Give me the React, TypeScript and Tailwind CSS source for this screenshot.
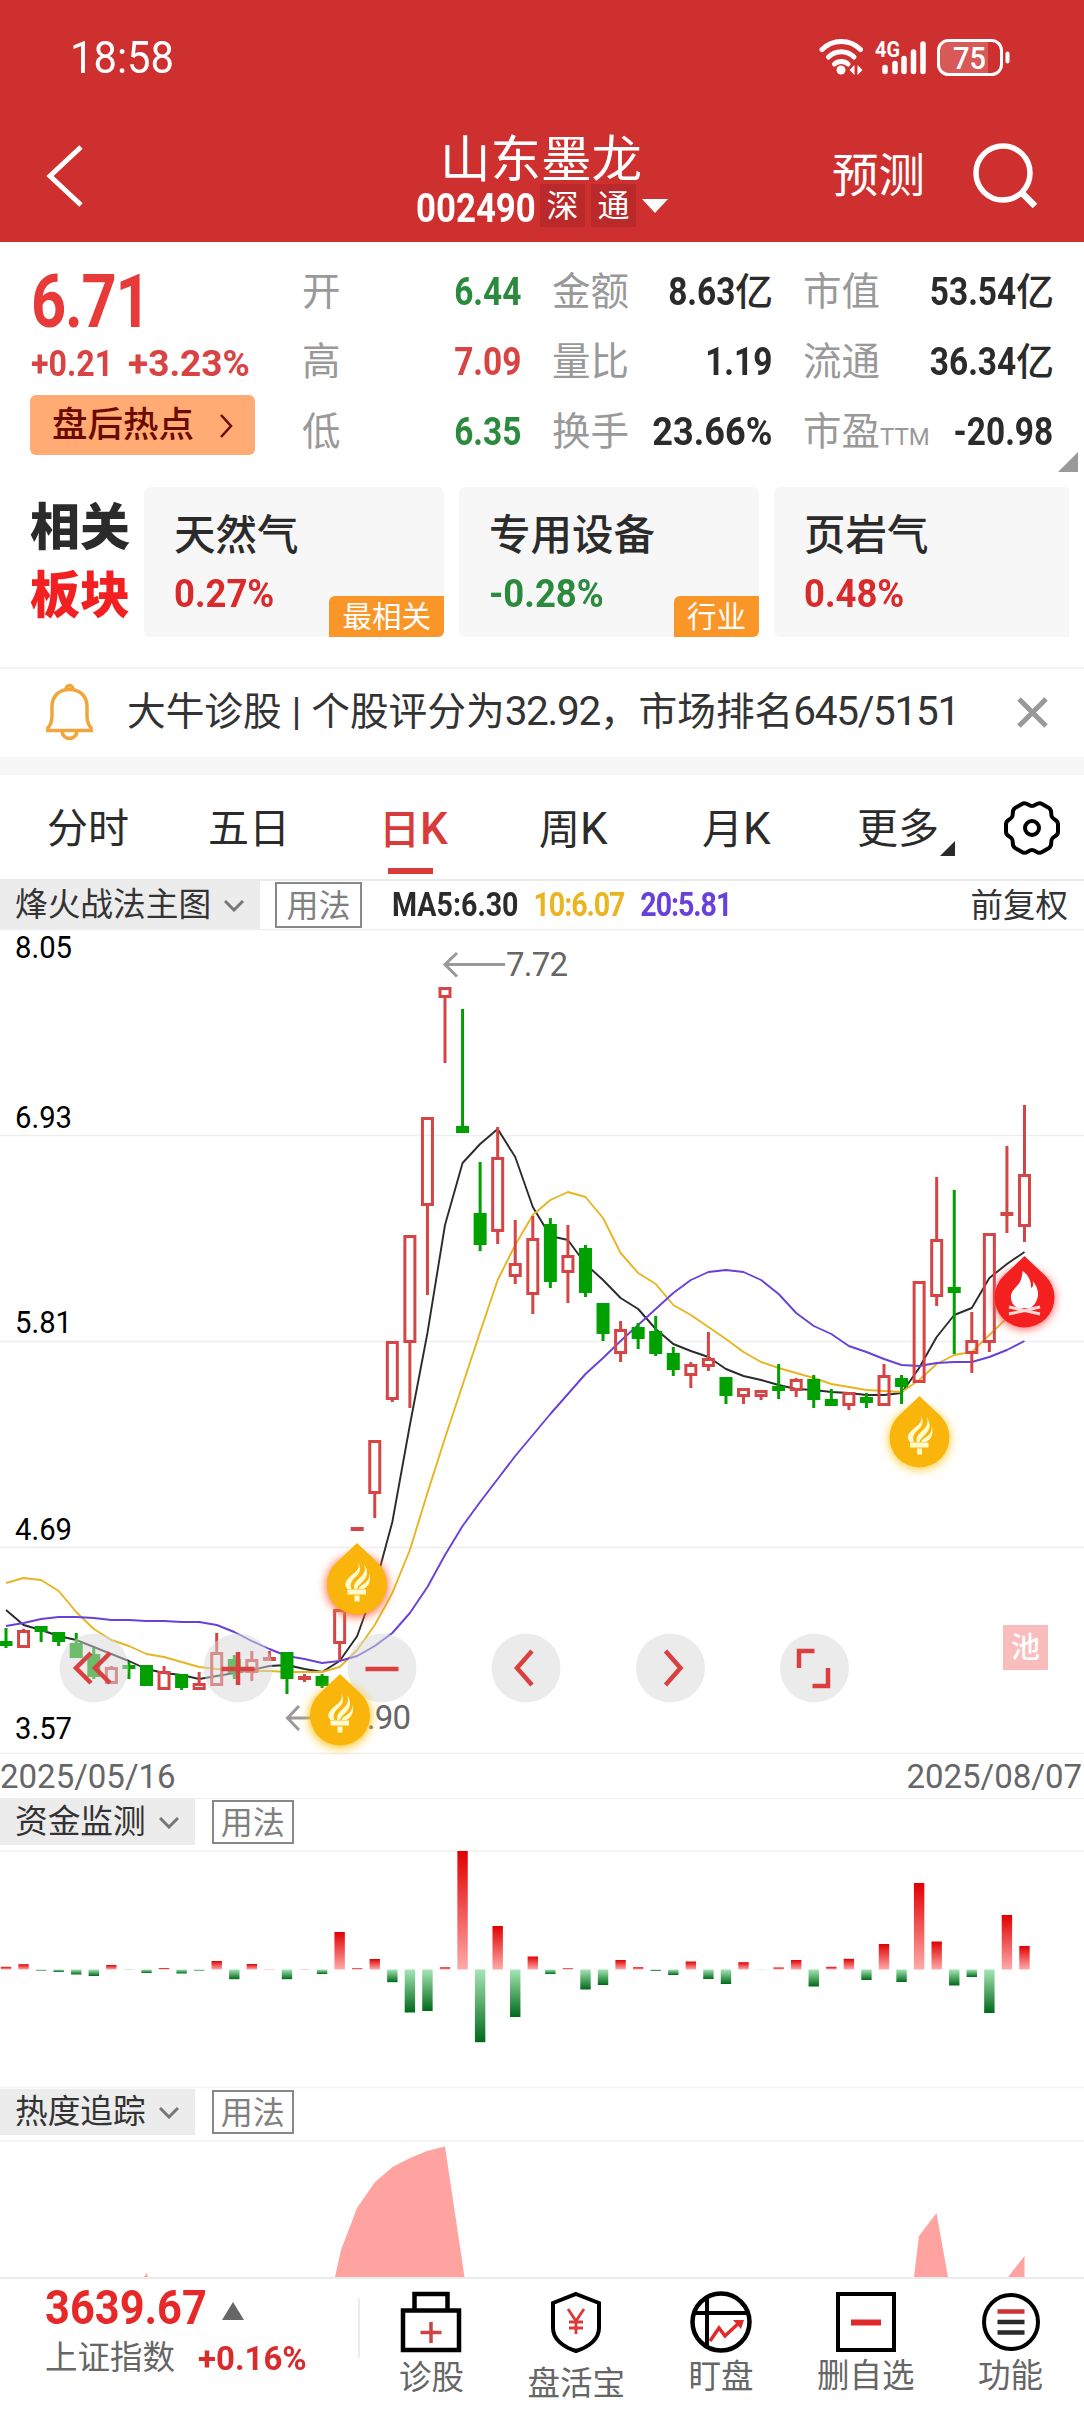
import React from "react";
import clsx from "clsx";

const STEP = 17.56;
const X0 = 6;
const cx = (i: number) => X0 + i * STEP;

// [direction, high, body top, body bottom, low], u = hollow red, d = solid green
type Candle = ["u" | "d", number, number, number, number];

const candles: Candle[] = [
  ["d", 1628, 1641, 1646, 1648],
  ["u", 1629, 1630, 1648, 1648],
  ["d", 1626, 1626, 1632, 1642],
  ["d", 1632, 1632, 1642, 1646],
  ["d", 1633, 1643, 1658, 1658],
  ["d", 1648, 1654, 1677, 1679],
  ["u", 1666, 1667, 1684, 1684],
  ["d", 1662, 1665, 1669, 1679],
  ["d", 1665, 1665, 1686, 1686],
  ["u", 1666, 1671, 1690, 1690],
  ["d", 1674, 1674, 1688, 1690],
  ["u", 1672, 1683, 1690, 1690],
  ["u", 1633, 1652, 1686, 1686],
  ["d", 1655, 1659, 1673, 1679],
  ["u", 1651, 1659, 1673, 1681],
  ["u", 1651, 1657, 1661, 1661],
  ["d", 1652, 1652, 1679, 1694],
  ["u", 1674, 1676, 1680, 1682],
  ["d", 1674, 1676, 1686, 1688],
  ["u", 1609, 1609, 1644, 1660],
  ["u", 1527, 1527, 1531, 1531],
  ["u", 1440, 1440, 1494, 1518],
  ["u", 1341, 1341, 1400, 1402],
  ["u", 1235, 1235, 1343, 1408],
  ["u", 1117, 1117, 1206, 1295],
  ["u", 987, 987, 998, 1063],
  ["d", 1009, 1126, 1133, 1133],
  ["d", 1162, 1213, 1245, 1251],
  ["u", 1127, 1157, 1232, 1244],
  ["u", 1220, 1263, 1277, 1284],
  ["u", 1216, 1238, 1295, 1314],
  ["d", 1218, 1224, 1282, 1288],
  ["u", 1225, 1255, 1273, 1303],
  ["d", 1245, 1248, 1293, 1297],
  ["d", 1303, 1303, 1334, 1341],
  ["u", 1321, 1329, 1354, 1362],
  ["d", 1323, 1327, 1339, 1349],
  ["d", 1316, 1331, 1354, 1356],
  ["d", 1347, 1353, 1370, 1376],
  ["u", 1362, 1364, 1376, 1388],
  ["u", 1332, 1358, 1367, 1371],
  ["d", 1377, 1377, 1396, 1404],
  ["u", 1388, 1388, 1397, 1404],
  ["u", 1390, 1390, 1397, 1400],
  ["d", 1364, 1386, 1391, 1399],
  ["u", 1378, 1379, 1391, 1397],
  ["d", 1375, 1379, 1400, 1408],
  ["d", 1389, 1399, 1406, 1406],
  ["u", 1392, 1392, 1406, 1410],
  ["d", 1393, 1397, 1403, 1408],
  ["u", 1364, 1375, 1406, 1406],
  ["d", 1375, 1378, 1387, 1404],
  ["u", 1281, 1281, 1383, 1383],
  ["u", 1177, 1239, 1297, 1306],
  ["d", 1190, 1287, 1293, 1354],
  ["u", 1312, 1340, 1354, 1373],
  ["u", 1233, 1233, 1343, 1352],
  ["u", 1146, 1212, 1216, 1233],
  ["u", 1105, 1174, 1227, 1242],
];

const ma5 = [
  1610, 1625, 1630, 1636, 1640, 1647, 1654, 1661, 1669, 1673, 1675, 1679, 1676, 1673, 1670, 1666, 1665, 1669, 1672, 1661,
  1636, 1587, 1522, 1425, 1333, 1225, 1163, 1144, 1129, 1157, 1207, 1236, 1240, 1264, 1280, 1298, 1309, 1329, 1344, 1351,
  1357, 1369, 1376, 1380, 1385, 1389, 1390, 1392, 1393, 1395, 1395, 1393, 1368, 1337, 1315, 1308, 1278, 1264, 1252,
];

const ma10 = [
  1583, 1578, 1580, 1591, 1612, 1629, 1640, 1646, 1654, 1657, 1662, 1667, 1669, 1670, 1671, 1671, 1672, 1672, 1672, 1667,
  1650, 1625, 1593, 1550, 1493, 1438, 1385, 1332, 1280, 1245, 1215, 1200, 1192, 1197, 1218, 1253, 1273, 1284, 1305, 1315,
  1327, 1339, 1352, 1362, 1368, 1373, 1378, 1384, 1387, 1390, 1391, 1392, 1380, 1364, 1355, 1352, 1335, 1318, 1300,
];

const ma20 = [
  1626, 1623, 1619, 1617, 1617, 1618, 1620, 1620, 1621, 1621, 1622, 1622, 1625, 1632, 1641, 1649, 1656, 1659, 1663, 1661,
  1656, 1646, 1633, 1613, 1587, 1555, 1526, 1502, 1479, 1456, 1435, 1414, 1394, 1374, 1358, 1341, 1325, 1309, 1293, 1280,
  1272, 1270, 1272, 1280, 1294, 1313, 1326, 1334, 1346, 1352, 1359, 1365, 1366, 1363, 1362, 1362, 1357, 1350, 1341,
];

const flows = [
  2.7, 5.3, -1, -2.5, -5, -6.5, 4.5, -0.5, -3.5, 1.5, -4, -1, 8.5, -9.7, 5.5, 0.5, -9.7, 0.5, -4.5, 37.5, 1.2, 10.5, -12.7,
  -43, -41.5, 2.2, 118.5, -72.7, 43.5, -47.5, 13, -4.5, 1.2, -20, -15.5, 9.5, 2.3, -1.5, -5.5, 8, -9.5, -14.5, 7.3, -0.4,
  2, 9.5, -17, 2.7, 10.7, -10.5, 25.5, -12.5, 86.5, 28, -16, -7.5, -43.5, 54.5, 23.5,
];

const linePoints = (ys: number[]) => ys.map((y, i) => `${cx(i)},${y}`).join(" ");

function StatusBar() {
  return (
    <div className="flex h-[112px] items-center pl-[70px] pr-[73px] pt-[3px]">
      <span className="inline-block origin-left scale-x-[.95] text-[44px] leading-none">18:58</span>
      <svg className="ml-auto" width="192" height="40" viewBox="819 36 192 40" fill="none" stroke="#fff">
        <g strokeWidth="5" strokeLinecap="round">
          <path d="M822 47.5a27 27 0 0 1 38.500 0" />
          <path d="M828.500 55a18 18 0 0 1 25.500 0" />
          <path d="M834.500 62a10 10 0 0 1 13.500 0" />
        </g>
        <circle cx="841" cy="68" r="4.500" fill="#fff" stroke="none" />
        <path d="M854.500 63v10l-5-5zM857.500 63v10l5-5z" fill="#fff" stroke="none" />
        <g strokeWidth="5.500" strokeLinecap="round">
          <path d="M885 65.500v4M895 61.500v8M904 56.500v13M913.500 50v19.500M923 42v27.500" />
        </g>
        <text x="875" y="55" textLength="25" lengthAdjust="spacingAndGlyphs" fill="#fff" stroke="none" fontSize="22" fontWeight="700">
          4G
        </text>
        <path d="M948 40h40v32h-40a9 9 0 0 1-9-9v-14a9 9 0 0 1 9-9z" fill="#fff" fillOpacity=".2" stroke="none" />
        <rect x="938.500" y="38.500" width="63" height="34" rx="10" strokeWidth="3" />
        <text x="953" y="67" textLength="33" lengthAdjust="spacingAndGlyphs" fill="#fff" stroke="none" fontSize="31" fontWeight="500">
          75
        </text>
        <path d="M1007.500 51.500v8" strokeWidth="4" strokeLinecap="round" />
      </svg>
    </div>
  );
}

function Header() {
  return (
    <header className="h-[242px] bg-[#ce302f] text-white">
      <StatusBar />
      <div className="grid h-[130px] grid-cols-[416px_252px_1fr] items-start">
        <svg className="ml-[46px] mt-8" width="40" height="64" viewBox="0 0 40 64" fill="none" stroke="#fff" strokeWidth="5">
          <path d="M35 3 4 32l31 29" />
        </svg>
        <div className="pt-6">
          <h1 className="-mr-1 pl-6 text-[50.500px] font-normal leading-[48px]">山东墨龙</h1>
          <div className="flex h-[43px] items-center whitespace-nowrap leading-[43px]">
            <span className="w-[124px] pt-[5px]">
              <b className="block origin-left scale-x-[.87] text-[40px] leading-[43px]">002490</b>
            </span>
            <span className="flex h-[43px] w-[45px] items-center justify-center bg-[#bb2a2b] pt-0.5 text-[32px]">深</span>
            <span className="ml-1.5 flex h-[43px] w-[45px] items-center justify-center bg-[#bb2a2b] pt-0.5 text-[32px]">通</span>
            <svg className="ml-1.5" width="26" height="14" viewBox="0 0 26 14" fill="#fff">
              <path d="M0 0h26L13 14z" />
            </svg>
          </div>
        </div>
        <div className="flex justify-end pr-[46px] pt-[31px]">
          <span className="pt-px text-[46.500px] leading-[64px]">预测</span>
          <svg className="ml-[47px]" width="66" height="66" viewBox="0 0 66 66" fill="none" stroke="#fff" strokeWidth="5.500">
            <circle cx="31" cy="30" r="27" />
            <path d="m50 50 13 13" strokeWidth="6.500" />
          </svg>
        </div>
      </div>
    </header>
  );
}

interface StatProps {
  label: string;
  sub?: string;
  value: string;
  unit?: string;
  color?: string;
}

function Stat({ label, sub, value, unit, color = "text-[#2b2b2b]" }: StatProps) {
  const percent = value.endsWith("%");
  return (
    <div className="flex h-[70px] items-center justify-between whitespace-nowrap">
      <span className="-ml-px text-[38.500px] text-[#999]">
        {label}
        {sub && <span className="text-[24px]">{sub}</span>}
      </span>
      <span className={clsx("flex items-center font-bold", color)}>
        <span className={clsx("inline-block origin-right text-[38px]", percent ? "scale-x-[.95]" : "scale-x-[.88]")}>{value}</span>
        {unit && <span className="-mr-px text-[38px] font-medium">{unit}</span>}
      </span>
    </div>
  );
}

function Quote() {
  return (
    <section className="relative flex h-[245px] pt-[15px]">
      <div className="-mt-0.5 w-[303px] pl-[31px]">
        <div className="mt-2 h-[78px] origin-left scale-x-[.83] text-[74px] font-bold leading-[78px] tracking-[-.02em] text-[#e83a38]">6.71</div>
        <div className="mt-[3px] flex h-[40px] whitespace-nowrap text-[37px] font-bold leading-[40px] text-[#d94343]">
          <span className="w-[97px] origin-left scale-x-[.87]">+0.21</span>
          <span className="origin-left">+3.23%</span>
        </div>
        <div className="-ml-px mt-[11px] flex h-[60px] w-[225px] items-center rounded-md bg-[#ffab73] pl-[22px] pt-0.5 text-[35.500px] font-medium text-[#6b0a00]">
          盘后热点
          <svg className="ml-[25px]" width="14" height="24" viewBox="0 0 14 24" fill="none" stroke="#6b0a00" strokeWidth="2.500">
            <path d="m2 1 10 11L2 23" />
          </svg>
        </div>
      </div>
      <div className="w-[218px]">
        <Stat label="开" value="6.44" color="text-[#2b8a3e]" />
        <Stat label="高" value="7.09" color="text-[#d94343]" />
        <Stat label="低" value="6.35" color="text-[#2b8a3e]" />
      </div>
      <div className="ml-8 w-[219px]">
        <Stat label="金额" value="8.63" unit="亿" />
        <Stat label="量比" value="1.19" />
        <Stat label="换手" value="23.66%" />
      </div>
      <div className="ml-8 w-[249px]">
        <Stat label="市值" value="53.54" unit="亿" />
        <Stat label="流通" value="36.34" unit="亿" />
        <Stat label="市盈" sub="TTM" value="-20.98" />
      </div>
      <svg className="absolute right-1.5 top-[210px]" width="20" height="20" viewBox="0 0 20 20" fill="#999">
        <path d="M20 0v20H0z" />
      </svg>
    </section>
  );
}

interface SectorProps {
  name: string;
  pct: string;
  tag?: string;
  down?: boolean;
  last?: boolean;
}

function Sector({ name, pct, tag, down, last }: SectorProps) {
  return (
    <div className={clsx("relative h-[150px] bg-[#f7f7f7] pl-[30px] pt-[26px]", last ? "w-[295px] rounded-l-md" : "w-[300px] rounded-md")}>
      <div className="text-[41.500px] font-medium leading-[46px] text-[#2b2b2b]">{name}</div>
      <div
        className={clsx(
          "mt-3 origin-left scale-x-[.96] text-[38px] font-bold leading-[46px]",
          down ? "text-[#2b8a3e]" : "text-[#d92b2b]",
        )}
      >
        {pct}
      </div>
      {tag && (
        <span className="absolute bottom-0 right-0 flex h-[41px] items-center rounded-br-md rounded-tl-md bg-[#fa9628] px-[13px] pt-0.5 text-[29.500px] text-white">
          {tag}
        </span>
      )}
    </div>
  );
}

function Sectors() {
  return (
    <section className="flex h-[180px] pl-[30px]">
      <div className="w-[114px] pt-[7px] text-[50px] font-black leading-[68px] text-[#2b2b2b]">
        <div>相关</div>
        <div className="text-[#f22020]">板块</div>
      </div>
      <div className="flex gap-[15px]">
        <Sector name="天然气" pct="0.27%" tag="最相关" />
        <Sector name="专用设备" pct="-0.28%" tag="行业" down />
        <Sector name="页岩气" pct="0.48%" last />
      </div>
    </section>
  );
}

function Notice() {
  return (
    <section className="flex h-[90px] items-center border-t-2 border-[#f3f3f3] pl-11 pr-9 pb-0.5">
      <svg width="51" height="58" viewBox="0 0 51 58" fill="none" stroke="#f0a63a" strokeWidth="3.500" strokeLinejoin="round">
        <path d="M2 47.500h47M3 46c4-4 5-8 5-13v-9C8 13 15 6.500 25.500 6.500S43 13 43 24v9c0 5 1 9 5 13" />
        <path d="M22 6.500a3.500 4 0 0 1 7 0M18 48a7.500 7.500 0 0 0 15 0" />
      </svg>
      <p className="ml-8 whitespace-nowrap pb-0.5 text-[38.700px] text-[#333]">
        大牛诊股<span className="mx-2.5">|</span>个股评分为
        <span className="text-[40.500px] tracking-[-1.3px]">32.92</span>，市场排名
        <span className="text-[40.500px] tracking-[-1.3px]">645/5151</span>
      </p>
      <svg className="ml-auto" width="31" height="31" viewBox="0 0 31 31" stroke="#999" strokeWidth="5">
        <path d="m2 2 27 27M29 2 2 29" />
      </svg>
    </section>
  );
}

const tabs = [
  { label: "分时", cell: "w-[129px] pl-[47px]" },
  { label: "五日", cell: "w-[173px] pl-[79px]" },
  { label: "日", k: true, cell: "w-[158px] pl-[77px]", active: true },
  { label: "周", k: true, cell: "w-[162px] pl-[79px]" },
  { label: "月", k: true, cell: "w-[155px] pl-20" },
];

function Tabs() {
  return (
    <nav className="flex h-[106px] border-b-2 border-[#ebebeb] text-[41px] text-[#2b2b2b]">
      {tabs.map((t) => (
        <div key={t.label} className={clsx("shrink-0 whitespace-nowrap pt-6", t.cell, t.active && "font-medium text-[#d93a3a]")}>
          <div className="h-[60px] leading-[60px]">
            {t.label}
            {t.k && <span className="text-[44px]">K</span>}
          </div>
          {t.active && <div className="ml-[9px] mt-[9px] h-1.5 w-[45px] bg-[#d93a3a]" />}
        </div>
      ))}
      <div className="flex w-[227px] pl-20 pt-6 leading-[60px]">
        <span className="whitespace-nowrap">更多</span>
        <svg className="ml-px mt-[42px]" width="15" height="15" viewBox="0 0 15 15" fill="#2b2b2b">
          <path d="M15 0v15H0z" />
        </svg>
      </div>
      <svg className="mt-[25px]" width="56" height="56" viewBox="-28 -28 56 56" fill="none" stroke="#000" strokeWidth="4" strokeLinejoin="round">
        <path d="M-10-24C-6-27-4-22 0-22S6-27 10-24L17-20C21-17 18-14 20-11S26-8 26-4V4C26 8 22 8 20 11S21 17 17 20L10 24C6 27 4 22 0 22S-6 27-10 24L-17 20C-21 17-18 14-20 11S-26 8-26 4V-4C-26-8-22-8-20-11S-21-17-17-20Z" />
        <circle r="7" />
      </svg>
    </nav>
  );
}

function Selector({ name, children }: { name: string; children?: React.ReactNode }) {
  const main = Boolean(children);
  return (
    <div className={clsx("flex items-center", main ? "h-12" : "h-[46px]")}>
      <div className="flex h-full items-center bg-[#ececec] pl-[15px] pr-4 pt-0.5 text-[32.700px] text-[#333]">
        <span className="whitespace-nowrap">{name}</span>
        <svg className="ml-[13px]" width="20" height="12" viewBox="0 0 20 12" fill="none" stroke="#777" strokeWidth="3">
          <path d="m1 1 9 9 9-9" />
        </svg>
      </div>
      <div
        className={clsx(
          "flex shrink-0 items-center justify-center border-2 border-[#888] pt-0.5 text-[32px] text-[#808080]",
          main ? "ml-[15px] h-[46px] w-[87px]" : "ml-[17px] h-[44px] w-[82px]",
        )}
      >
        用法
      </div>
      {children}
    </div>
  );
}

function Torch({ x, y, glow }: { x: number; y: number; glow: string }) {
  return (
    <g transform={`translate(${x} ${y})`}>
      <circle cy="43" r="31" fill={glow} filter="url(#glow)" />
      <path d="M0 0 20.500 19.500A30 30 0 1 1-20.500 19.500Z" fill="#f9b50b" />
      <g fill="#fffbd0">
        <path d="M1 19c2.500 6-1 9-6 13-7 6-8.500 9-4.500 14l4 0c-2-5 0-8.500 4-12C3.500 30 4.500 25 1 19Z" />
        <path d="M7 21c2.500 6 0 10-4.500 14-4 3.800-6.500 7-5 11h2.500C1 41 9 38 10 31 10.500 27 9 24 7 21Z" />
        <path d="M12 30c1 6-2 9-6 11.500C3.500 43 2 44 1.800 46h4.500C11 44 15 38 12 30Z" />
        <path d="M-9.500 46.500h18.500v5h-18.500zM-2.500 52.500h5v6h-5z" />
      </g>
    </g>
  );
}

function Campfire({ x, y }: { x: number; y: number }) {
  return (
    <g transform={`translate(${x} ${y})`}>
      <circle cy="43" r="30" fill="#ff5a5a" filter="url(#glow)" />
      <path d="M0 0 20.500 19.500A30 30 0 1 1-20.500 19.500Z" fill="#f42020" />
      <path
        d="M-2 15c5 3 9 9 8.500 17C9 31 9 28 8 25c5 5 6.500 12 5 17-1.500 5-4 8-7 10H-7c-5-3-7-7-6.500-12 .5-6 6-9 9-14 1.500-4 2.500-7 2.500-11Z"
        fill="#fff"
      />
      <path d="M-15.500 51 15.500 58M15.500 51-15.500 58" stroke="#ffdcdc" strokeWidth="3" />
    </g>
  );
}

function RoundButton({ x, children }: { x: number; children: React.ReactNode }) {
  return (
    <g transform={`translate(${x} 1668)`} fill="none" stroke="#d9403f" strokeWidth="4.500">
      <circle r="34.500" fill="#d8d8d8" fillOpacity=".5" stroke="none" />
      {children}
    </g>
  );
}

function KLine() {
  return (
    <svg className="block" width="1084" height="826" viewBox="0 929 1084 826">
      <defs>
        <filter id="glow" x="-50%" y="-50%" width="200%" height="200%">
          <feGaussianBlur stdDeviation="5" />
        </filter>
      </defs>
      <path d="M0 929.500h1084M0 1135.500h1084M0 1341.500h1084M0 1547.500h1084M0 1753.500h1084" stroke="#eee" strokeWidth="1.500" />
      <g fill="none" strokeWidth="1.900" strokeLinejoin="round">
        <polyline points={linePoints(ma5)} stroke="#2b2b2b" />
        <polyline points={linePoints(ma10)} stroke="#e8b422" />
        <polyline points={linePoints(ma20)} stroke="#6741d9" />
      </g>
      {candles.map(([dir, high, top, bottom, low], i) => {
        const color = dir === "u" ? "#d64545" : "#00a000";
        const flat = bottom - top < 6;
        return (
          <g key={i}>
            {top > high && <rect x={cx(i) - 1.5} y={high} width="3" height={top - high} fill={color} />}
            {low > bottom && <rect x={cx(i) - 1.5} y={bottom} width="3" height={low - bottom} fill={color} />}
            {dir === "d" || flat ? (
              <rect x={cx(i) - 6.5} y={top} width="13" height={bottom - top} fill={color} />
            ) : (
              <rect x={cx(i) - 5} y={top + 1.5} width="10" height={bottom - top - 3} fill="none" stroke={color} strokeWidth="3" />
            )}
          </g>
        );
      })}
      <g fill="#000" fontSize="31">
        <text x="15" y="958" textLength="57" lengthAdjust="spacingAndGlyphs">8.05</text>
        <text x="15" y="1128" textLength="57" lengthAdjust="spacingAndGlyphs">6.93</text>
        <text x="15" y="1333" textLength="57" lengthAdjust="spacingAndGlyphs">5.81</text>
        <text x="15" y="1540" textLength="57" lengthAdjust="spacingAndGlyphs">4.69</text>
        <text x="15" y="1739" textLength="57" lengthAdjust="spacingAndGlyphs">3.57</text>
      </g>
      <g fill="none" stroke="#999" strokeWidth="3">
        <path d="M505 964.500h-59M457 953l-12 11.500 12 12" />
        <path d="M349 1718h-60M299 1706l-11.500 12 11.500 12" />
      </g>
      <g fill="#666" fontSize="33">
        <text x="506" y="976" textLength="62">7.72</text>
        <text x="349" y="1729" textLength="62">3.90</text>
      </g>
      <RoundButton x={94}>
        <path d="M-3-15-18 0-3 15M16-15 1 0 16 15" />
      </RoundButton>
      <RoundButton x={238}>
        <path d="M-16.500 1h33M0-16v33" />
      </RoundButton>
      <RoundButton x={382}>
        <path d="M-16.500 1h33" />
      </RoundButton>
      <RoundButton x={526}>
        <path d="M6-17-9 0 6 17" />
      </RoundButton>
      <RoundButton x={670.5}>
        <path d="M-5-17 10 0-5 17" />
      </RoundButton>
      <RoundButton x={814.5}>
        <path d="M0-17h-15.500V0M-2 18h15.500V0" />
      </RoundButton>
      <Torch x={357} y={1543} glow="#ff6a3c" />
      <Torch x={340} y={1674} glow="#ffc21a" />
      <Torch x={919.5} y={1396} glow="#ffd24a" />
      <Campfire x={1024.5} y={1256} />
      <rect x="1003" y="1625" width="45" height="45" fill="#f9bdbd" />
      <text x="1025.500" y="1658" fontSize="29" fontWeight="500" fill="#fff" textAnchor="middle">池</text>
    </svg>
  );
}

function FundFlow() {
  return (
    <svg className="block" width="1084" height="244" viewBox="0 1845 1084 244">
      <defs>
        <linearGradient id="in" x1="0" y1="0" x2="0" y2="1">
          <stop offset="0" stopColor="#e10000" />
          <stop offset="1" stopColor="#ffaaaa" />
        </linearGradient>
        <linearGradient id="out" x1="0" y1="0" x2="0" y2="1">
          <stop offset="0" stopColor="#a5e6b4" />
          <stop offset="1" stopColor="#00691a" />
        </linearGradient>
      </defs>
      <path d="M0 1851h1084M0 2087.500h1084" stroke="#f2f2f2" strokeWidth="1.500" />
      {flows.map((v, i) => (
        <rect
          key={i}
          x={cx(i) - 5.2}
          y={v > 0 ? 1969.5 - v : 1969.5}
          width="10.400"
          height={Math.abs(v)}
          fill={v > 0 ? "url(#in)" : "url(#out)"}
        />
      ))}
    </svg>
  );
}

function Heat() {
  return (
    <svg className="block" width="1084" height="142" viewBox="0 2135 1084 142">
      <path d="M0 2141h1084" stroke="#f2f2f2" strokeWidth="1.500" />
      <g fill="#ffa3a1">
        <path d="M335 2277 341 2250 357 2208 375 2182 392.500 2167 410 2158 427 2151 445 2146.500 464.500 2277z" />
        <path d="M914 2277 919 2236 936.500 2213 948 2277z" />
        <path d="M1008 2277 1024.500 2256V2277zM144 2277 146.500 2273 148 2277z" />
      </g>
    </svg>
  );
}

const actions = [
  {
    label: "诊股",
    gap: "mt-[3px]",
    icon: (
      <>
        <path d="M3 19.500h56V59H3zM14.500 19V3h33v16" stroke="#000" strokeWidth="4.500" />
        <path d="M31 31v21M20.500 41.500h21" stroke="#c44" strokeWidth="3.500" />
      </>
    ),
  },
  {
    label: "盘活宝",
    gap: "mt-[9px]",
    icon: (
      <>
        <path d="M31 3 54 12v25c0 11-10 19-23 23C18 56 8 48 8 37V12z" stroke="#000" strokeWidth="4" />
        <path d="m23 18 8 12 8-12M31 30v13M24 31h14M24 37h14" stroke="#d93a3a" strokeWidth="2.800" />
      </>
    ),
  },
  {
    label: "盯盘",
    gap: "mt-0.5",
    icon: (
      <>
        <circle cx="31" cy="31" r="28.500" stroke="#000" strokeWidth="4.500" />
        <path d="M3 22h56M17 6v51" stroke="#000" strokeWidth="4" />
        <path d="M20 50 29 37l6 8 16-15" stroke="#e02a2a" strokeWidth="3.500" />
        <path d="m43 29 11 0-3 9z" fill="#e02a2a" />
      </>
    ),
  },
  {
    label: "删自选",
    gap: "mt-px",
    icon: (
      <>
        <path d="M3 3h56v56H3z" stroke="#000" strokeWidth="4" />
        <path d="M16 31.500h30" stroke="#e02a2a" strokeWidth="6" />
      </>
    ),
  },
  {
    label: "功能",
    gap: "mt-px",
    icon: (
      <>
        <circle cx="31" cy="31" r="27" stroke="#000" strokeWidth="4" />
        <path d="M17.500 20.500h27" stroke="#c93434" strokeWidth="4.500" />
        <path d="M17.500 31h27M17.500 41.500h27" stroke="#2b2b2b" strokeWidth="4.500" />
      </>
    ),
  },
];

function BottomBar() {
  return (
    <footer className="flex h-[135px] border-t-2 border-[#ebebeb] bg-white">
      <div className="w-[358px] pl-[45px]">
        <div className="flex h-[56px] items-center pt-px">
          <span className="w-[177px]">
            <b className="inline-block origin-left scale-x-[.885] text-[49px] leading-[56px] text-[#e62828]">3639.67</b>
          </span>
          <svg className="mt-1.5" width="22" height="18" viewBox="0 0 22 18" fill="#666">
            <path d="M11 0 22 18H0z" />
          </svg>
        </div>
        <div className="flex h-[46px] items-center whitespace-nowrap text-[32.500px] text-[#666]">
          上证指数
          <b className="ml-[23px] inline-block origin-left scale-x-[.97] text-[34px] text-[#d92b2b]">+0.16%</b>
        </div>
      </div>
      <div className="mt-[19px] h-[60px] w-0.5 bg-[#ececec]" />
      <div className="-ml-px flex">
        {actions.map((a) => (
          <div key={a.label} className="flex w-[144.800px] flex-col items-center pt-3">
            <svg width="62" height="62" viewBox="0 0 62 62" fill="none">
              {a.icon}
            </svg>
            <span className={clsx("whitespace-nowrap text-[32.500px] leading-[44px] text-[#666]", a.gap)}>{a.label}</span>
          </div>
        ))}
      </div>
    </footer>
  );
}

export default function App() {
  return (
    <div className="h-[2412px] w-[1084px] overflow-hidden bg-white font-[Roboto,'Noto_Sans_CJK_SC',sans-serif]">
      <Header />
      <Quote />
      <Sectors />
      <Notice />
      <div className="h-[18px] bg-[#f7f7f7]" />
      <Tabs />
      <Selector name="烽火战法主图">
        <div className="ml-[30px] flex origin-left scale-x-[.88] whitespace-nowrap text-[32.500px] font-bold">
          <span className="text-[#2b2b2b]">MA5:6.30</span>
          <span className="ml-[17px] tracking-[-1.2px] text-[#ebb522]">10:6.07</span>
          <span className="ml-[18px] tracking-[-1.2px] text-[#6741d9]">20:5.81</span>
        </div>
        <span className="ml-auto mr-4 pt-0.5 text-[32.500px] text-[#333]">前复权</span>
      </Selector>
      <KLine />
      <div className="flex h-11 items-center justify-between border-b border-[#eee] pt-px text-[33px] text-[#666]">
        <span>2025/05/16</span>
        <span className="pr-0.5">2025/08/07</span>
      </div>
      <Selector name="资金监测" />
      <FundFlow />
      <Selector name="热度追踪" />
      <Heat />
      <BottomBar />
    </div>
  );
}
